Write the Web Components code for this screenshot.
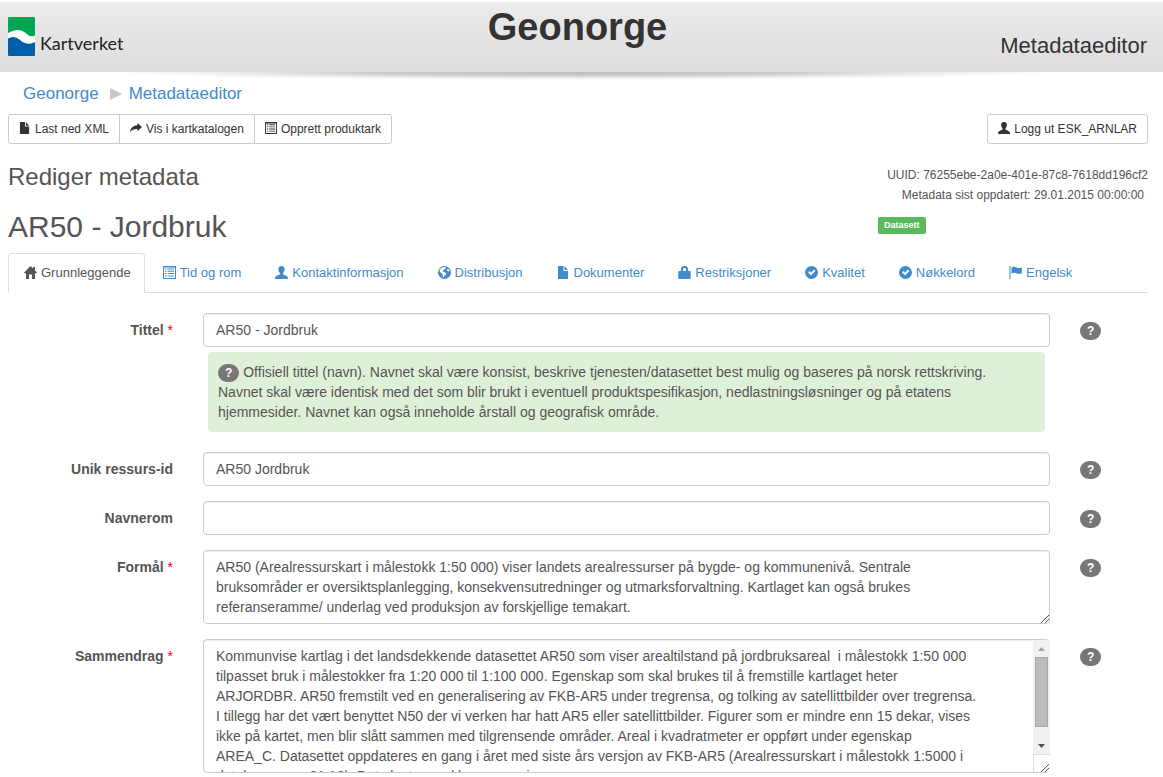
<!DOCTYPE html>
<html lang="nb">
<head>
<meta charset="utf-8">
<title>Geonorge - Metadataeditor</title>
<style>
  html { background: #fff; }
  body {
    margin: 0;
    font: 14px/20px "Liberation Sans", Arial, sans-serif;
    color: #555;
    --link: #428bca;
    --line: #ccc;
  }
</style>
</head>
<body>
<metadata-editor></metadata-editor>
<script>
const ICONS = {
  file: '<path d="M1 0h5.500v4.500q0 .5.5.5H11v7.500q0 .5-.5.5h-9q-.5 0-.5-.5V.5Q1 0 1 0zM7.500 0L11 4H7.500z"/>',
  share: '<path d="M8 1l5 4.500-5 4.500V7.600C4.500 7.300 2 8.500 0 11 .4 6.500 3.500 3.800 8 3.500z"/>',
  list: '<path fill-rule="evenodd" d="M0 0h13v13H0zM1 1.500v10.500h11V1.500zM2 2.500h1.500v1H2zM4.500 2.500H11v1H4.500zM2 4.800h1.500v1H2zM4.500 4.800H11v1H4.500zM2 7.100h1.500v1H2zM4.500 7.100H11v1H4.500zM2 9.400h1.500v1H2zM4.500 9.400H11v1H4.500z"/>',
  user: '<path d="M6.500 0C8.600 0 9.700 1.300 9.600 3.300 9.500 5 8.900 6.200 8.100 7v1.200c.3.700 4.500 1.400 4.800 3.300V13H.1v-1.500c.3-1.900 4.500-2.600 4.800-3.300V7C4.100 6.200 3.500 5 3.400 3.300 3.300 1.300 4.400 0 6.500 0z"/>',
  home: '<path d="M6.500 0L9 2.500V1h2v3.500l2 2.200-.4.600H11V13H8V8.500H5V13H2V7.300H.4L0 6.700z"/>',
  globe: '<path fill-rule="evenodd" d="M6.500 0a6.500 6.500 0 1 0 0 13 6.500 6.500 0 0 0 0-13zM5.200 1.200L7.300 1l1 .9-1.600.8-.4 1.100-1.500.7.2 1.200 1.500.4 1.700 1.300-.3 1.300-1.500.7-.4 2-1.100-.7-.5-2.700L2.500 6.500 1.500 4.800C2 3 3.400 1.700 5.200 1.200zM9.400 3l1.300.2.900 1.700-1.200.7-1.300-.8z"/>',
  lock: '<path fill-rule="evenodd" d="M3 5V3C3 1 4.200 0 6.500 0S10 1 10 3V5h2q.7 0 .7.700v6.600q0 .7-.7.700H1q-.7 0-.7-.7V5.700Q.3 5 1 5zM5 5h3V3.200C8 2.400 7.500 2 6.500 2S5 2.400 5 3.200z"/>',
  check: '<path fill-rule="evenodd" d="M6.500 0a6.500 6.500 0 1 0 0 13 6.500 6.500 0 0 0 0-13zM8.900 3.500l1.500 1.500L6 9.400 3 6.500 4.500 5 6 6.400z"/>',
  flag: '<path d="M.5 0h1v13h-1zM2.500 1.500C4.500.3 6 .6 7.500 1.500S11 2.300 12.800 1.200v6C11 8.300 9 8.200 7.500 7.300S4.500 6.500 2.500 7.500z"/>'
};

const define = (name, html, init) => customElements.define(name, class extends HTMLElement {
  connectedCallback() {
    if (this.shadowRoot) return;
    const root = this.attachShadow({ mode: 'open' });
    root.innerHTML = typeof html === 'function' ? html(this) : html;
    if (init) init(this, root);
  }
});

define('glyph-icon', el => `
  <style>
    :host { display: inline-block; width: 1em; height: 1em; flex: none; margin-bottom: 2px; }
    svg { display: block; width: 100%; height: 100%; fill: currentColor; }
  </style>
  <svg viewBox="0 0 13 13" aria-hidden="true">${ICONS[el.getAttribute('name')]}</svg>`);

define('site-header', `
  <style>
    :host { display: block; padding-top: 2px; }
    header {
      position: relative; height: 70px; padding: 0 16px 0 8px;
      display: grid; grid-template-columns: 1fr auto 1fr;
      background: linear-gradient(#ececec, #dedcdd);
      color: #333;
    }
    header::after {
      content: ""; position: absolute; left: 9%; right: 9%; top: 100%; height: 8px;
      background: radial-gradient(50% 100% at 50% 0, rgba(0,0,0,.26), rgba(0,0,0,.2) 45%, rgba(0,0,0,.07) 75%, transparent);
    }
    .logo { display: flex; align-items: flex-end; gap: 5px; align-self: start; padding-top: 15px;
      color: #222; text-decoration: none; font: 18px/26px Lato, sans-serif; }
    .logo svg { display: block; width: 27px; height: 39px; }
    h1 { margin: 4px 0 0; font-size: 38px; line-height: 42px; font-weight: 700; }
    .app { justify-self: end; font-size: 22px; line-height: 28px; padding-top: 30px; }
  </style>
  <header>
    <a class="logo" href="#">
      <svg viewBox="0 0 27 39" aria-hidden="true">
        <rect width="27" height="39" rx="1" fill="#fff"/>
        <path fill="#00a651" d="M1 0h25q1 0 1 1v17.500c-3 1.500-5.500.8-8.500-1.800C14 12.800 9 11 0 16V1q0-1 1-1z"/>
        <path fill="#005fab" d="M0 21.500c4-2.500 8-2 12 1.500 5 4.300 10 5 15 2V38q0 1-1 1H1q-1 0-1-1z"/>
      </svg>
      <span>Kartverket</span>
    </a>
    <h1>Geonorge</h1>
    <div class="app">Metadataeditor</div>
  </header>`);

define('bread-crumb', `
  <style>
    :host { display: block; }
    nav { display: flex; align-items: center; padding-left: 15px; font-size: 17px; line-height: 24px; }
    a { color: var(--link); text-decoration: none; }
    svg { display: block; width: 12px; height: 12px; margin: 0 7px 0 11px; fill: #c8c8c8; }
  </style>
  <nav aria-label="Brødsmuler">
    <a href="#">Geonorge</a>
    <svg viewBox="0 0 12 12" aria-hidden="true"><path d="M0 0l12 6-12 6z"/></svg>
    <a href="#">Metadataeditor</a>
  </nav>`);

define('button-group', `
  <style>:host { display: flex; }</style><slot></slot>`);

define('icon-button', el => `
  <style>
    :host { display: block; }
    :host(:not(:first-child)) { margin-left: -1px; }
    button {
      display: flex; align-items: center; gap: 4px; height: 30px; padding: 0 10px;
      border: 1px solid var(--line); border-radius: 0; background: #fff; color: #333;
      font: 12px/18px "Liberation Sans", Arial, sans-serif; white-space: nowrap;
    }
    :host(:first-child) button { border-top-left-radius: 3px; border-bottom-left-radius: 3px; }
    :host(:last-child) button { border-top-right-radius: 3px; border-bottom-right-radius: 3px; }
  </style>
  <button type="button"><glyph-icon name="${el.getAttribute('icon')}"></glyph-icon><span><slot></slot></span></button>`);

define('tab-bar', `
  <style>
    :host { display: block; }
    nav { display: flex; gap: 2px; border-bottom: 1px solid #ddd; }
  </style>
  <nav><slot></slot></nav>`);

define('tab-item', el => `
  <style>
    :host { display: block; margin-bottom: -1px; }
    a {
      display: flex; align-items: center; gap: 4px; height: 38px; padding: 0 15px;
      border: 1px solid transparent; border-radius: 4px 4px 0 0;
      font-size: 13px; line-height: 18px; color: var(--link); text-decoration: none; white-space: nowrap;
    }
    :host([active]) a { padding-right: 13px; color: #555; background: #fff; border-color: #ddd #ddd #fff; }
  </style>
  <a href="#"><glyph-icon name="${el.getAttribute('icon')}"></glyph-icon><span><slot></slot></span></a>`);

define('help-badge', `
  <style>
    :host { display: inline-block; }
    button {
      display: block; padding: 3px 7px; border: 0; border-radius: 10px; background: #777; color: #fff;
      font: 700 12px/12px "Liberation Sans", Arial, sans-serif;
    }
  </style>
  <button type="button" aria-label="Hjelp">?</button>`);

define('form-field', el => {
  const rows = el.getAttribute('rows');
  const bar = el.hasAttribute('scroll');
  return `
  <style>
    :host { display: block; }
    .row { display: grid; grid-template-columns: 165px minmax(0, 1fr) 68px; column-gap: 30px; align-items: start; }
    label { padding-top: 7px; text-align: right; font-weight: 700; }
    label span { color: red; font-weight: 400; }
    .box { position: relative; }
    input, textarea {
      display: block; box-sizing: border-box; width: 100%; margin: 0; padding: 6px 12px;
      border: 1px solid var(--line); border-radius: 4px; background: #fff; color: #555;
      font: 14px/20px "Liberation Sans", Arial, sans-serif; box-shadow: inset 0 1px 1px rgba(0,0,0,.075);
    }
    input { height: 34px; }
    textarea { padding-right: 72px; resize: none; overflow: hidden; }
    .grip { position: absolute; right: 1px; bottom: 1px; width: 8px; height: 8px; stroke: #555; }
    .bar { position: absolute; top: 1px; right: 0; bottom: 18px; width: 17px; background: #f1f1f1;
      display: grid; grid-template-rows: 17px 70px 1fr 17px; justify-items: center; border-bottom: 1px solid #ddd; box-sizing: border-box; }
    .bar svg { width: 7px; height: 4px; align-self: center; }
    .thumb { box-sizing: border-box; width: 13px; height: 70px; background: #bcbcbc; border: 1px solid #a8a8a8; }
    .corner { position: absolute; right: 0; bottom: 1px; width: 17px; height: 17px; box-sizing: border-box; border-left: 1px solid #ddd; background: #fff; }
    .help { padding-top: 9px; }
    help-badge { vertical-align: top; }
  </style>
  <div class="row">
    <label for="c">${el.getAttribute('label')}${el.hasAttribute('required') ? ' <span>*</span>' : ''}</label>
    <div>
      <div class="box">
        ${rows ? `<textarea id="c" rows="${rows}"></textarea>` : '<input id="c" type="text">'}
        ${bar ? `<div class="bar" aria-hidden="true">
          <svg viewBox="0 0 7 4" fill="#a3a3a3"><path d="M0 4L3.500 0 7 4z"/></svg>
          <div class="thumb"></div><span></span>
          <svg viewBox="0 0 7 4" fill="#505050"><path d="M0 0h7L3.500 4z"/></svg>
        </div><div class="corner"></div>` : ''}
        ${rows ? '<svg class="grip" viewBox="0 0 8 8" aria-hidden="true"><path d="M0 8L8 0M4 8l4-4"/></svg>' : ''}
      </div>
      <slot></slot>
    </div>
    <div class="help"><help-badge></help-badge></div>
  </div>`;
}, (el, root) => { root.getElementById('c').value = el.getAttribute('value') || ''; });

define('help-text', `
  <style>
    :host { display: block; margin: 5px; padding: 10px 24px 10px 10px; border-radius: 4px; background: #dff0d8; }
    help-badge { vertical-align: middle; height: 18px; margin: -1px 0; }
  </style>
  <help-badge></help-badge> <slot></slot>`);

define('record-heading', `
  <style>
    :host { display: flex; justify-content: space-between; }
    h2, h3 { margin: 0; font-weight: 400; }
    h2 { font-size: 24px; line-height: 26px; }
    h3 { font-size: 30px; line-height: 34px; margin-top: 20px; }
    .meta { width: 270px; font-size: 12px; text-align: right; padding-top: 1px; }
    .meta div { white-space: nowrap; }
    .meta .date { padding-right: 4px; }
    .meta .tag { text-align: left; margin-top: 12px; }
    .tag span { display: block; width: max-content; padding: 4px 6px; border-radius: 2px; background: #5cb85c; color: #fff;
      font: 700 9px/9px "Liberation Sans", Arial, sans-serif; }
  </style>
  <div><h2>Rediger metadata</h2><h3>AR50 - Jordbruk</h3></div>
  <div class="meta">
    <div>UUID: 76255ebe-2a0e-401e-87c8-7618dd196cf2</div>
    <div class="date">Metadata sist oppdatert: 29.01.2015 00:00:00</div>
    <div class="tag"><span>Datasett</span></div>
  </div>`);

define('metadata-editor', `
  <style>
    :host { display: block; }
    main { padding: 10px 15px 4px 8px; }
    .tools { display: flex; justify-content: space-between; margin-top: 8px; }
    record-heading { margin-top: 20px; }
    tab-bar { margin-top: 9px; }
    form { display: flex; flex-direction: column; gap: 15px; margin-top: 20px; }
  </style>
  <site-header></site-header>
  <main>
    <bread-crumb></bread-crumb>
    <div class="tools">
      <button-group>
        <icon-button icon="file">Last ned XML</icon-button>
        <icon-button icon="share">Vis i kartkatalogen</icon-button>
        <icon-button icon="list">Opprett produktark</icon-button>
      </button-group>
      <button-group><icon-button icon="user">Logg ut ESK_ARNLAR</icon-button></button-group>
    </div>
    <record-heading></record-heading>
    <tab-bar>
      <tab-item icon="home" active>Grunnleggende</tab-item>
      <tab-item icon="list">Tid og rom</tab-item>
      <tab-item icon="user">Kontaktinformasjon</tab-item>
      <tab-item icon="globe">Distribusjon</tab-item>
      <tab-item icon="file">Dokumenter</tab-item>
      <tab-item icon="lock">Restriksjoner</tab-item>
      <tab-item icon="check">Kvalitet</tab-item>
      <tab-item icon="check">Nøkkelord</tab-item>
      <tab-item icon="flag">Engelsk</tab-item>
    </tab-bar>
    <form>
      <form-field label="Tittel" required value="AR50 - Jordbruk">
        <help-text>Offisiell tittel (navn). Navnet skal være konsist, beskrive tjenesten/datasettet best mulig og baseres på norsk rettskriving. Navnet skal være identisk med det som blir brukt i eventuell produktspesifikasjon, nedlastningsløsninger og på etatens hjemmesider. Navnet kan også inneholde årstall og geografisk område.</help-text>
      </form-field>
      <form-field label="Unik ressurs-id" value="AR50 Jordbruk"></form-field>
      <form-field label="Navnerom"></form-field>
      <form-field label="Formål" required rows="3" value="AR50 (Arealressurskart i målestokk 1:50 000) viser landets arealressurser på bygde- og kommunenivå. Sentrale bruksområder er oversiktsplanlegging, konsekvensutredninger og utmarksforvaltning. Kartlaget kan også brukes referanseramme/ underlag ved produksjon av forskjellige temakart."></form-field>
      <form-field label="Sammendrag" required rows="6" scroll value="Kommunvise kartlag i det landsdekkende datasettet AR50 som viser arealtilstand på jordbruksareal  i målestokk 1:50 000 tilpasset bruk i målestokker fra 1:20 000 til 1:100 000. Egenskap som skal brukes til å fremstille kartlaget heter ARJORDBR. AR50 fremstilt ved en generalisering av FKB-AR5 under tregrensa, og tolking av satellittbilder over tregrensa. I tillegg har det vært benyttet N50 der vi verken har hatt AR5 eller satellittbilder. Figurer som er mindre enn 15 dekar, vises ikke på kartet, men blir slått sammen med tilgrensende områder. Areal i kvadratmeter er oppført under egenskap&#10;AREA_C. Datasettet oppdateres en gang i året med siste års versjon av FKB-AR5 (Arealressurskart i målestokk 1:5000 i databasen per 31.12). Data lastes ned kommunevis."></form-field>
    </form>
  </main>`);
</script>
</body>
</html>
